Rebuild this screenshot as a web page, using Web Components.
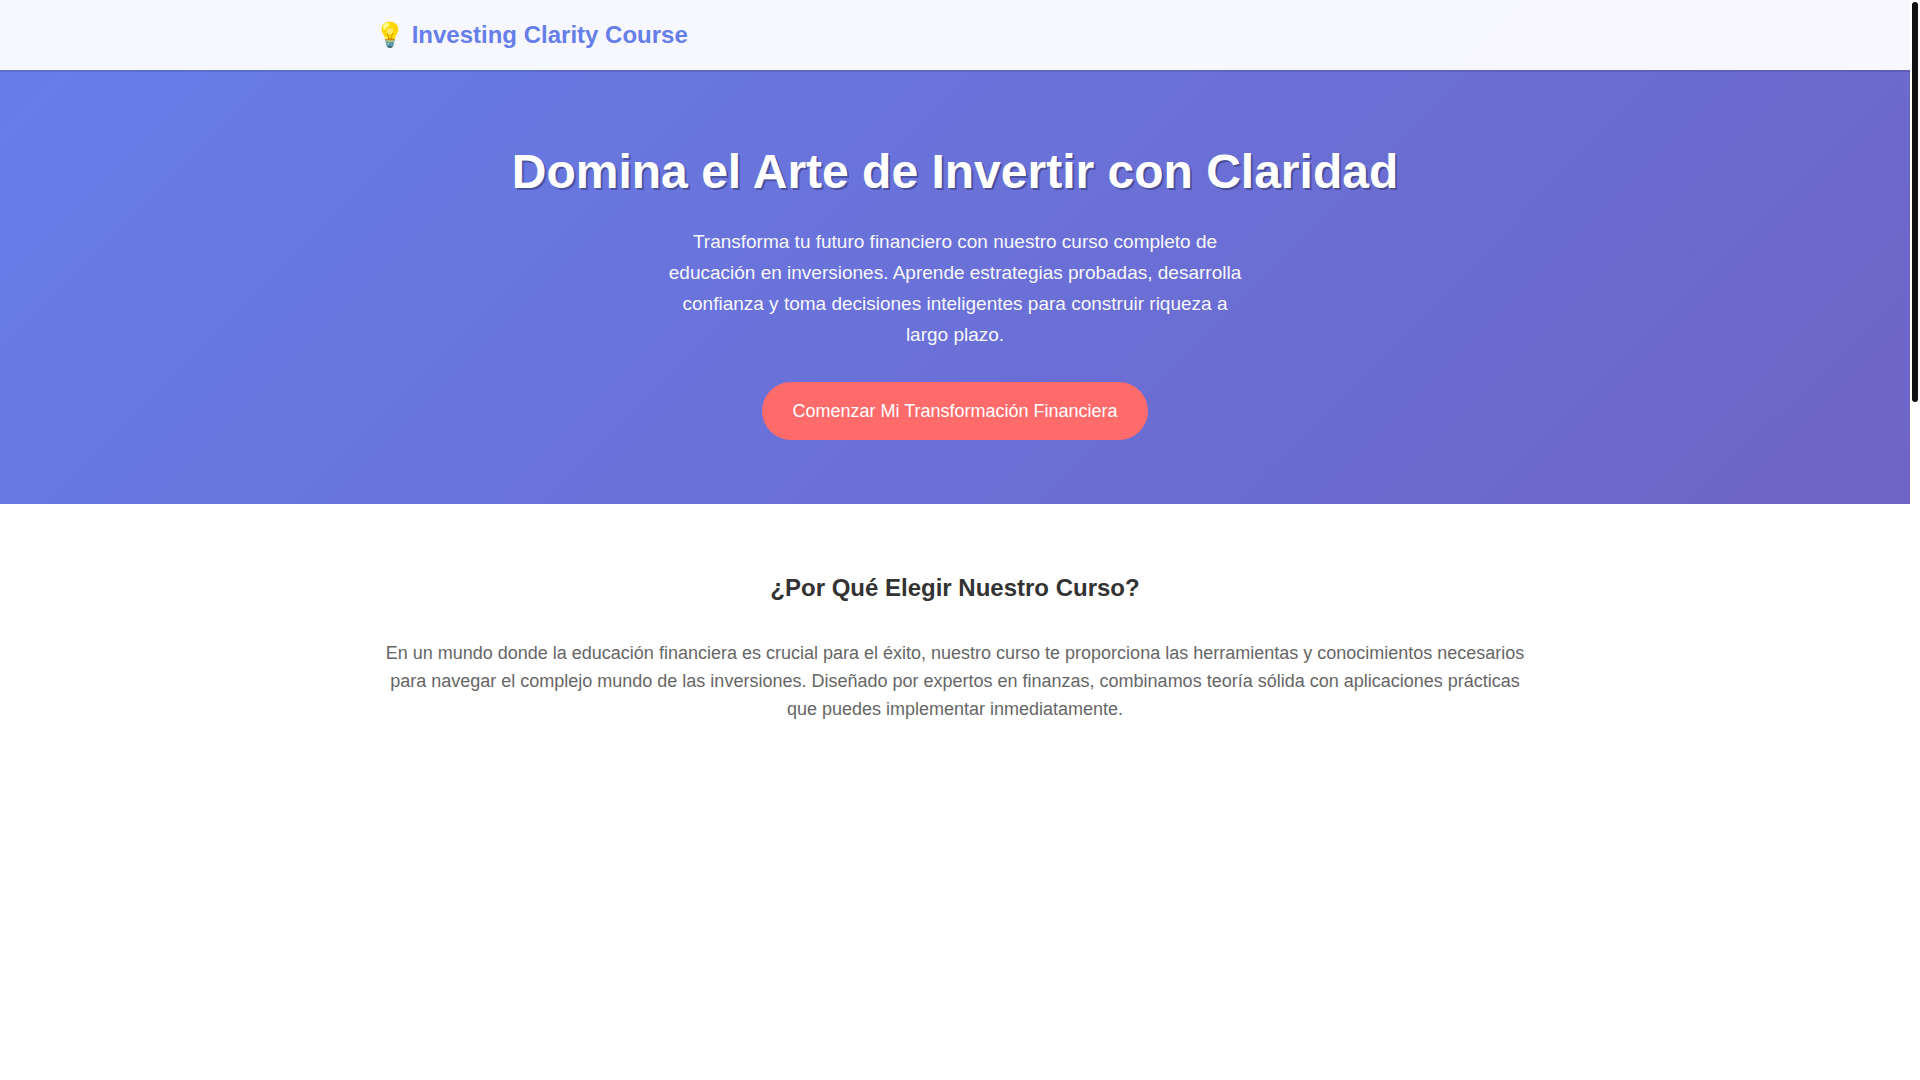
<!DOCTYPE html>
<html lang="es">
<head>
<meta charset="utf-8">
<meta name="viewport" content="width=device-width, initial-scale=1">
<title>Investing Clarity Course</title>
<style>
  body { margin: 0; font-family: "Liberation Sans", Arial, sans-serif; color: #333; background: #fff; }
</style>
</head>
<body>
<course-page>
  <course-header slot="header">Investing Clarity Course</course-header>
  <course-hero>
    <span slot="title">Domina el Arte de Invertir con Claridad</span>
    <span slot="text">Transforma tu futuro financiero con nuestro curso completo de educación en inversiones. Aprende estrategias probadas, desarrolla confianza y toma decisiones inteligentes para construir riqueza a largo plazo.</span>
    <span slot="action">Comenzar Mi Transformación Financiera</span>
  </course-hero>
  <course-section>
    <span slot="title">¿Por Qué Elegir Nuestro Curso?</span>
    En un mundo donde la educación financiera es crucial para el éxito, nuestro curso te proporciona las herramientas y conocimientos necesarios para navegar el complejo mundo de las inversiones. Diseñado por expertos en finanzas, combinamos teoría sólida con aplicaciones prácticas que puedes implementar inmediatamente.
  </course-section>
</course-page>
<script>
  const define = (name, html) => customElements.define(name, class extends HTMLElement {
    constructor() {
      super();
      this.attachShadow({ mode: "open" }).innerHTML = html;
    }
  });

  define("scroll-rail", `
    <style>
      :host { display: block; box-sizing: border-box; width: 10px; padding: 2px; background: #fff; }
      div { height: 37vh; border-radius: 3px; background: #111; }
    </style>
    <div></div>`);

  define("course-page", `
    <style>
      :host { display: flex; min-height: 100vh; }
      .content {
        flex: 1; display: flex; flex-direction: column;
        background: linear-gradient(135deg, #667eea 0%, #764ba2 100%) 0 0 / 100% 2912px no-repeat;
      }
      main { flex: 1; display: flex; flex-direction: column; }
    </style>
    <div class="content">
      <slot name="header"></slot>
      <main><slot></slot></main>
    </div>
    <scroll-rail></scroll-rail>`);

  define("course-header", `
    <style>
      :host { display: block; position: relative; background: rgba(255, 255, 255, 0.95); box-shadow: 0 2px 0 rgba(0, 0, 0, 0.1); }
      header { max-width: 1160px; margin: 0 auto; padding: 16px 20px; }
      a { color: #667eea; font-size: 24px; font-weight: bold; line-height: 38px; text-decoration: none; }
    </style>
    <header><a href="#">💡 <slot></slot></a></header>`);

  define("course-hero", `
    <style>
      :host { display: block; color: #fff; text-align: center; }
      section { display: flex; flex-direction: column; align-items: center; padding: 64px 20px; }
      h1 { margin: 0 0 16px; font-size: 48px; line-height: 76px; text-shadow: 2px 2px 0 rgba(0, 0, 0, 0.3); }
      p { max-width: 590px; margin: 0 0 32px; font-size: 19px; line-height: 31px; opacity: 0.95; }
      button {
        padding: 15px 30px; border: 0; border-radius: 50px; background: #ff6b6b; color: #fff;
        font-family: inherit; font-size: 18px; line-height: 28px; cursor: pointer;
      }
    </style>
    <section>
      <h1><slot name="title"></slot></h1>
      <p><slot name="text"></slot></p>
      <button type="button"><slot name="action"></slot></button>
    </section>`);

  define("course-section", `
    <style>
      :host { display: block; flex: 1; background: #fff; text-align: center; }
      section { max-width: 1160px; margin: 0 auto; padding: 64px 20px; }
      h2 { margin: 0 0 32px; color: #333; font-size: 24px; line-height: 39px; }
      p { margin: 0; color: #666; font-size: 18px; line-height: 28px; }
    </style>
    <section>
      <h2><slot name="title"></slot></h2>
      <p><slot></slot></p>
    </section>`);
</script>
</body>
</html>
